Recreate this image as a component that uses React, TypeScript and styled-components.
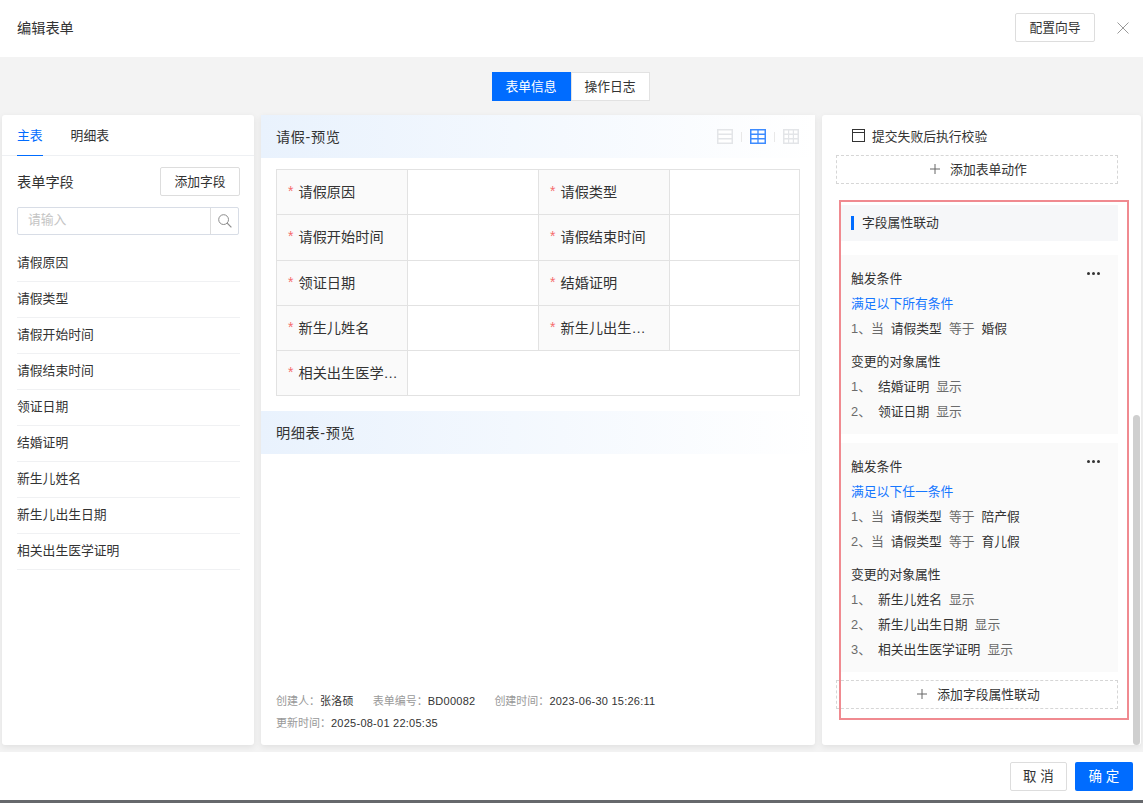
import React from 'react';
import styled, { createGlobalStyle } from 'styled-components';

const fields = ['请假原因', '请假类型', '请假开始时间', '请假结束时间', '领证日期', '结婚证明', '新生儿姓名', '新生儿出生日期', '相关出生医学证明'];

const tableRows = [
  ['请假原因', '请假类型'],
  ['请假开始时间', '请假结束时间'],
  ['领证日期', '结婚证明'],
  ['新生儿姓名', '新生儿出生日期'],
  ['相关出生医学证明'],
];

const rules = [
  {
    mode: '满足以下所有条件',
    conditions: ['婚假'],
    targets: ['结婚证明', '领证日期'],
  },
  {
    mode: '满足以下任一条件',
    conditions: ['陪产假', '育儿假'],
    targets: ['新生儿姓名', '新生儿出生日期', '相关出生医学证明'],
  },
];

const LayoutIcon = ({ columns, active }: { columns: number; active?: boolean }) => {
  const color = active ? '#3d8bff' : '#e3e5e8';
  return (
    <svg width="16" height="15" viewBox="0 0 16 15" fill="none">
      <rect x="0.75" y="0.75" width="14.5" height="13.5" fill="#ffffff" stroke={color} strokeWidth="1.5" />
      <path d="M1 5.25H15M1 9.75H15" stroke={color} strokeWidth="1.3" />
      {columns === 2 && <path d="M8 1V14" stroke={color} strokeWidth="1.3" />}
      {columns === 3 && <path d="M5.6 1V14M10.4 1V14" stroke={color} strokeWidth="1.2" />}
    </svg>
  );
};

const App = () => (
  <Page>
    <GlobalStyle />
    <Header>
      <HeaderTitle>编辑表单</HeaderTitle>
      <HeaderActions>
        <OutlineButton>配置向导</OutlineButton>
        <CloseIcon width="12" height="12" viewBox="0 0 12 12">
          <path d="M0.5 0.5L11.5 11.5M11.5 0.5L0.5 11.5" stroke="#9a9a9a" fill="none" />
        </CloseIcon>
      </HeaderActions>
    </Header>

    <Body>
      <Segments>
        <Segment $active>表单信息</Segment>
        <Segment>操作日志</Segment>
      </Segments>

      <Columns>
        <Card>
          <Tabs>
            <Tab $active>主表</Tab>
            <Tab>明细表</Tab>
          </Tabs>
          <FieldsBar>
            <FieldsTitle>表单字段</FieldsTitle>
            <OutlineButton>添加字段</OutlineButton>
          </FieldsBar>
          <SearchBox>
            <SearchText>请输入</SearchText>
            <SearchButton>
              <svg width="14" height="14" viewBox="0 0 14 14" fill="none">
                <circle cx="5.6" cy="5.6" r="4.9" stroke="#8c8c8c" />
                <path d="M9.2 9.2L13.4 13.4" stroke="#8c8c8c" strokeWidth="1.2" />
              </svg>
            </SearchButton>
          </SearchBox>
          <FieldList>
            {fields.map((field) => (
              <FieldItem key={field}>{field}</FieldItem>
            ))}
          </FieldList>
        </Card>

        <Card>
          <PreviewHeader>
            <PreviewTitle>请假-预览</PreviewTitle>
            <LayoutIcons>
              <LayoutIcon columns={1} />
              <IconDivider />
              <LayoutIcon columns={2} active />
              <IconDivider />
              <LayoutIcon columns={3} />
            </LayoutIcons>
          </PreviewHeader>
          <FormTable>
            {tableRows.map((row) =>
              row.map((label) => (
                <React.Fragment key={label}>
                  <LabelCell $wide={row.length === 1}>
                    <Star>*</Star>
                    <LabelText>{label}</LabelText>
                  </LabelCell>
                  <ValueCell $wide={row.length === 1} />
                </React.Fragment>
              ))
            )}
          </FormTable>
          <PreviewHeader>
            <PreviewTitle>明细表-预览</PreviewTitle>
          </PreviewHeader>
          <Meta>
            <MetaRow>
              <span>
                <MetaKey>创建人：</MetaKey>张洛硕
              </span>
              <span>
                <MetaKey>表单编号：</MetaKey>BD00082
              </span>
              <span>
                <MetaKey>创建时间：</MetaKey>2023-06-30 15:26:11
              </span>
            </MetaRow>
            <MetaRow>
              <span>
                <MetaKey>更新时间：</MetaKey>2025-08-01 22:05:35
              </span>
            </MetaRow>
          </Meta>
        </Card>

        <SideCard>
          <CheckRow>
            <svg width="13" height="13" viewBox="0 0 13 13" fill="none">
              <rect x="0.5" y="0.5" width="12" height="12" stroke="#333333" />
              <path d="M1 3.5H12" stroke="#333333" />
            </svg>
            提交失败后执行校验
          </CheckRow>
          <DashedButton>
            <PlusIcon />
            添加表单动作
          </DashedButton>
          <SectionHead>
            <SectionTitle>字段属性联动</SectionTitle>
          </SectionHead>
          <RuleList>
            {rules.map((rule) => (
              <RuleCard key={rule.mode}>
                <MoreDots>
                  <i />
                  <i />
                  <i />
                </MoreDots>
                <RuleGroup>
                  <RuleLine>触发条件</RuleLine>
                  <RuleLine $blue>{rule.mode}</RuleLine>
                  {rule.conditions.map((value, i) => (
                    <RuleLine key={value}>
                      <Muted>{i + 1}、当</Muted>
                      <span>请假类型</span>
                      <Muted>等于</Muted>
                      <span>{value}</span>
                    </RuleLine>
                  ))}
                </RuleGroup>
                <RuleGroup>
                  <RuleLine>变更的对象属性</RuleLine>
                  {rule.targets.map((target, i) => (
                    <RuleLine key={target}>
                      <Index>{i + 1}、</Index>
                      <span>{target}</span>
                      <Muted>显示</Muted>
                    </RuleLine>
                  ))}
                </RuleGroup>
              </RuleCard>
            ))}
          </RuleList>
          <AddRuleButton>
            <PlusIcon />
            添加字段属性联动
          </AddRuleButton>
          <Highlight />
          <ScrollThumb />
        </SideCard>
      </Columns>
    </Body>

    <Footer>
      <OutlineButton $wide>取 消</OutlineButton>
      <PrimaryButton>确 定</PrimaryButton>
    </Footer>
    <BottomEdge />
  </Page>
);

export default App;

const PlusIcon = () => (
  <svg width="10" height="10" viewBox="0 0 10 10">
    <path d="M5 0V10M0 5H10" stroke="#666666" strokeWidth="1" fill="none" />
  </svg>
);

const GlobalStyle = createGlobalStyle`
  html, body {
    margin: 0;
    padding: 0;
    background: #ffffff;
  }
  * {
    box-sizing: border-box;
  }
  body {
    font-family: "Liberation Sans", "Noto Sans CJK SC", sans-serif;
    font-size: 12.8px;
    color: #333333;
  }
`;

const Page = styled.div`
  width: 1143px;
  height: 803px;
  display: flex;
  flex-direction: column;
  overflow: hidden;
`;

const Header = styled.header`
  height: 57px;
  flex-shrink: 0;
  display: flex;
  align-items: center;
  justify-content: space-between;
  padding: 0 14px 2px 17px;
  background: #ffffff;
`;

const HeaderTitle = styled.div`
  font-size: 14.2px;
  margin-top: -2px;
`;

const HeaderActions = styled.div`
  display: flex;
  align-items: center;
  gap: 22px;
`;

const CloseIcon = styled.svg`
  display: block;
`;

const OutlineButton = styled.button<{ $wide?: boolean }>`
  height: 29px;
  width: ${(p) => (p.$wide ? '57px' : '80px')};
  padding: 0 0 2px;
  border: 1px solid #dddddd;
  border-radius: 2px;
  background: #ffffff;
  color: #333333;
  font: inherit;
`;

const PrimaryButton = styled.button`
  width: 58px;
  height: 29px;
  padding: 0 0 2px;
  border: none;
  border-radius: 2px;
  background: #006cff;
  color: #ffffff;
  font: inherit;
`;

const Body = styled.main`
  height: 695px;
  flex-shrink: 0;
  display: flex;
  flex-direction: column;
  background: #f3f3f3;
`;

const Segments = styled.div`
  display: flex;
  justify-content: center;
  padding: 15px 2px 14px 0;
`;

const Segment = styled.div<{ $active?: boolean }>`
  width: 79px;
  height: 29px;
  display: flex;
  align-items: center;
  justify-content: center;
  padding-bottom: 2px;
  border: 1px solid ${(p) => (p.$active ? '#006cff' : '#e2e2e2')};
  background: ${(p) => (p.$active ? '#006cff' : '#ffffff')};
  color: ${(p) => (p.$active ? '#ffffff' : '#333333')};
`;

const Columns = styled.div`
  display: grid;
  grid-template-columns: 252px 554px 319px;
  gap: 7px;
  height: 630px;
  padding-left: 2px;
`;

const Card = styled.section`
  display: flex;
  flex-direction: column;
  min-height: 0;
  background: #ffffff;
  border-radius: 3px;
  box-shadow: 0 2px 6px rgba(0, 0, 0, 0.08);
`;

const Tabs = styled.div`
  height: 41px;
  flex-shrink: 0;
  display: flex;
  gap: 28px;
  padding-left: 15px;
  border-bottom: 1px solid #eef0f3;
`;

const Tab = styled.div<{ $active?: boolean }>`
  height: 41px;
  padding-top: 10px;
  color: ${(p) => (p.$active ? '#006cff' : '#333333')};
  border-bottom: ${(p) => (p.$active ? '1px solid #006cff' : 'none')};
`;

const FieldsBar = styled.div`
  display: flex;
  align-items: center;
  justify-content: space-between;
  padding: 11px 14px 0 15px;
`;

const FieldsTitle = styled.span`
  font-size: 14.2px;
  margin-top: -2px;
`;

const SearchBox = styled.div`
  display: flex;
  height: 28px;
  margin: 11px 15px 0;
  border: 1px solid #d8dde6;
  border-radius: 2px;
`;

const SearchText = styled.div`
  flex: 1;
  padding-left: 10px;
  line-height: 24px;
  color: #c4c4c4;
`;

const SearchButton = styled.div`
  width: 28px;
  display: flex;
  align-items: center;
  justify-content: center;
  border-left: 1px solid #dddddd;
`;

const FieldList = styled.ul`
  list-style: none;
  margin: 11px 0 0;
  padding: 0 14px 0 15px;
`;

const FieldItem = styled.li`
  height: 36px;
  line-height: 34px;
  border-bottom: 1px solid #f0f1f3;
`;

const PreviewHeader = styled.div`
  height: 43px;
  flex-shrink: 0;
  display: flex;
  align-items: center;
  justify-content: space-between;
  padding: 0 16px 0 15px;
  background: linear-gradient(90deg, #e9f2fd 0%, #ffffff 100%);
`;

const PreviewTitle = styled.span`
  font-size: 14.2px;
  letter-spacing: 0.6px;
  margin-top: -2px;
`;

const LayoutIcons = styled.div`
  display: flex;
  align-items: center;
  gap: 8px;
`;

const IconDivider = styled.div`
  width: 1px;
  height: 10px;
  background: #e8e8e8;
`;

const FormTable = styled.div`
  display: grid;
  grid-template-columns: 131px 131px 131px 130px;
  grid-auto-rows: 45.3px;
  width: 524px;
  margin: 11px 0 15px 15px;
  border-top: 1px solid #e2e2e2;
  border-left: 1px solid #e2e2e2;
`;

const LabelCell = styled.div<{ $wide?: boolean }>`
  display: flex;
  align-items: center;
  gap: 5px;
  min-width: 0;
  padding: 0 ${(p) => (p.$wide ? '6px' : '10px')} 2px 11px;
  background: #fafafa;
  border-right: 1px solid #e2e2e2;
  border-bottom: 1px solid #e2e2e2;
  font-size: 14.2px;
`;

const Star = styled.span`
  color: #f56c6c;
  flex-shrink: 0;
  font-size: 14px;
`;

const LabelText = styled.span`
  overflow: hidden;
  white-space: nowrap;
  text-overflow: ellipsis;
`;

const ValueCell = styled.div<{ $wide?: boolean }>`
  grid-column: ${(p) => (p.$wide ? 'span 3' : 'auto')};
  border-right: 1px solid #e2e2e2;
  border-bottom: 1px solid #e2e2e2;
`;

const Meta = styled.div`
  margin-top: auto;
  padding: 0 15px 12px;
  font-size: 11px;
  letter-spacing: 0.25px;
  color: #333333;
`;

const MetaRow = styled.div`
  display: flex;
  gap: 19px;
  height: 22px;
  align-items: center;
`;

const MetaKey = styled.span`
  color: #999999;
  letter-spacing: 0;
`;

const SideCard = styled(Card)`
  position: relative;
  padding: 0 23px 0 14px;
  overflow: hidden;
`;

const CheckRow = styled.div`
  height: 40px;
  display: flex;
  align-items: center;
  gap: 7px;
  padding-left: 16px;
`;

const DashedButton = styled.div`
  height: 29px;
  flex-shrink: 0;
  display: flex;
  align-items: center;
  justify-content: center;
  gap: 10px;
  padding: 0 0 2px 3px;
  border: 1px dashed #d6d6d6;
`;

const SectionHead = styled.div`
  height: 36px;
  flex-shrink: 0;
  display: flex;
  align-items: center;
  margin: 21px 0 14px 5px;
  padding-left: 10px;
  background: #f6f7f9;
`;

const SectionTitle = styled.div`
  height: 14px;
  padding-left: 8px;
  border-left: 3px solid #006cff;
  line-height: 14px;
`;

const RuleList = styled.div`
  display: flex;
  flex-direction: column;
  gap: 9px;
  margin-left: 5px;
`;

const RuleCard = styled.div`
  position: relative;
  display: flex;
  flex-direction: column;
  gap: 8px;
  padding: 12px 10px 9px;
  background: #fafafa;
`;

const MoreDots = styled.div`
  position: absolute;
  top: 17px;
  right: 18px;
  display: flex;
  gap: 2px;

  i {
    width: 3px;
    height: 3px;
    border-radius: 50%;
    background: #333333;
  }
`;

const RuleGroup = styled.div`
  display: flex;
  flex-direction: column;
`;

const RuleLine = styled.div<{ $blue?: boolean }>`
  height: 25px;
  display: flex;
  align-items: center;
  gap: 7px;
  padding-bottom: 4px;
  color: ${(p) => (p.$blue ? '#1677ff' : '#333333')};
`;

const Muted = styled.span`
  color: #6b6b6b;
`;

const Index = styled(Muted)`
  width: 20px;
`;

const AddRuleButton = styled(DashedButton)`
  margin-top: 8px;
`;

const Highlight = styled.div`
  position: absolute;
  top: 85px;
  left: 17px;
  width: 290px;
  height: 520px;
  border: 2px solid #f08a90;
  pointer-events: none;
`;

const ScrollThumb = styled.div`
  position: absolute;
  top: 300px;
  right: 1px;
  bottom: 0;
  width: 7px;
  border-radius: 4px;
  background: #cfcfcf;
`;

const Footer = styled.footer`
  height: 48px;
  flex-shrink: 0;
  display: flex;
  align-items: center;
  justify-content: flex-end;
  gap: 8px;
  padding: 0 10px 0 0;
  background: #ffffff;
  font-size: 13.5px;
`;

const BottomEdge = styled.div`
  height: 3px;
  flex-shrink: 0;
  background: #66686c;
`;
